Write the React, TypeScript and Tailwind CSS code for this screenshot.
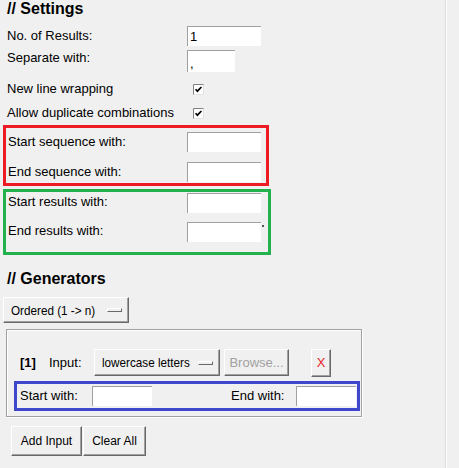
import React from "react";

const RAISED =
  "border border-t-white border-l-white border-r-[#696969] border-b-[#696969] shadow-[inset_-1px_-1px_0_#a0a0a0]";

function Check() {
  return (
    <svg width="11" height="11" viewBox="0 0 11 11" className="block">
      <rect x="0" y="0" width="11" height="11" fill="#fff" />
      <path d="M0.5 11 V0.5 H11" stroke="#808080" fill="none" />
      <path d="M10.5 0.5 V10.5 H0.5" stroke="#e3e3e3" fill="none" />
      <path d="M2.6 5.2 L4.4 7.2 L8.4 3" stroke="#000" strokeWidth="1.7" fill="none" />
    </svg>
  );
}

function Indicator() {
  return (
    <div className="w-[15px] h-[4px] border border-t-white border-l-white border-r-[#696969] border-b-[#696969] bg-[#f0f0f0]" />
  );
}

function Dropdown({ label, className }: { label: string; className: string }) {
  return (
    <div className={`${RAISED} ${className} flex items-center pl-[7px] pr-[6px]`}>
      <span className="w-[80px] whitespace-nowrap inline-block origin-left scale-x-[0.9] text-[13px] leading-[15px]">
        {label}
      </span>
      <div className="ml-auto">
        <Indicator />
      </div>
    </div>
  );
}

export default function App() {
  return (
    <div className="w-[459px] h-[468px] bg-[#f0f0f0] flex font-['Liberation_Sans',Arial,sans-serif] text-[13px] text-black overflow-hidden">
      <div className="w-[446px] h-full border-r border-[#dcdcdc] flex flex-col">
        {/* Settings */}
        <div className="pl-[7px] h-[24px] font-bold text-[16px] leading-[18px]">// Settings</div>

        <div className="mt-[2px] h-[20px] pl-[7px] flex items-center">
          <div className="w-[180px]">No. of Results:</div>
          <div className="w-[74px] h-[20px] bg-white border-t border-l border-[#a0a0a0] pl-[2px] leading-[19px]">1</div>
        </div>

        <div className="mt-[4px] h-[22px] pl-[7px] flex items-start">
          <div className="w-[180px] leading-[15px]">Separate with:</div>
          <div className="w-[48px] h-[22px] bg-white border-t border-l border-[#a0a0a0] pl-[2px] pt-[5px] leading-[15px]">,</div>
        </div>

        <div className="mt-[5px] h-[24px] pl-[7px] flex items-center">
          <div className="w-[186px]">New line wrapping</div>
          <Check />
        </div>
        <div className="h-[24px] pl-[7px] flex items-center">
          <div className="w-[186px]">Allow duplicate combinations</div>
          <Check />
        </div>

        {/* red box */}
        <div className="ml-[3px] w-[266px] h-[61px] border-[3px] border-[#ed1c24] pl-[2px] pt-[4px] flex flex-col gap-[10px]">
          <div className="h-[20px] flex items-center">
            <div className="w-[179px]">Start sequence with:</div>
            <div className="w-[74px] h-[20px] bg-white border-t border-l border-[#a0a0a0]" />
          </div>
          <div className="h-[20px] flex items-center">
            <div className="w-[179px]">End sequence with:</div>
            <div className="w-[74px] h-[20px] bg-white border-t border-l border-[#a0a0a0]" />
          </div>
        </div>

        {/* green box */}
        <div className="mt-[3px] ml-[3px] w-[268px] h-[66px] border-[3px] border-[#22b14c] pl-[2px] pt-[1px] flex flex-col gap-[9px]">
          <div className="h-[20px] flex items-center">
            <div className="w-[179px] -mt-[3px]">Start results with:</div>
            <div className="w-[74px] h-[20px] bg-white border-t border-l border-[#a0a0a0]" />
          </div>
          <div className="h-[20px] flex items-center">
            <div className="w-[179px] -mt-[2px]">End results with:</div>
            <div className="w-[74px] h-[20px] bg-white border-t border-l border-[#a0a0a0]" />
            <div className="self-start mt-[3px] ml-[1px] w-[2px] h-[2px] bg-[#555]" />
          </div>
        </div>

        {/* Generators */}
        <div className="mt-[15px] pl-[7px] h-[18px] font-bold text-[16px] leading-[18px]">// Generators</div>

        <Dropdown label="Ordered (1 -> n)" className="mt-[9px] ml-[3px] w-[126px] h-[26px]" />

        {/* panel */}
        <div className="mt-[6px] ml-[6px] w-[356px] h-[88px] border border-[#a0a0a0] shadow-[inset_1px_1px_0_#fff,1px_1px_0_#fff] pt-[19px] flex flex-col">
          <div className="h-[27px] flex items-center pl-[13px]">
            <span className="font-bold w-[29px]">[1]</span>
            <span className="w-[45px]">Input:</span>
            <Dropdown label="lowercase letters" className="w-[126px] h-[27px]" />
            <div className={`${RAISED} ml-[4px] w-[65px] h-[27px] flex items-center justify-center text-[#a0a0a0]`}>
              Browse...
            </div>
            <div className={`${RAISED} ml-[22px] w-[20px] h-[28px] flex items-center justify-center text-[#e8242c]`}>
              X
            </div>
          </div>
          <div className="mt-[5px] ml-[7px] w-[346px] h-[30px] border-[3px] border-[#3f48cc] pl-[3px] pt-[2px] flex items-start">
            <div className="w-[72px] leading-[20px]">Start with:</div>
            <div className="w-[60px] h-[20px] bg-white border-t border-l border-[#a0a0a0]" />
            <div className="ml-[79px] w-[65px] leading-[20px]">End with:</div>
            <div className="w-[60px] h-[20px] bg-white border-t border-l border-[#a0a0a0]" />
          </div>
        </div>

        <div className="mt-[9px] ml-[11px] flex">
          <div className={`${RAISED} w-[71px] h-[30px] flex items-center justify-center text-[12px]`}>Add Input</div>
          <div className={`${RAISED} ml-[1px] w-[63px] h-[30px] flex items-center justify-center text-[12px]`}>Clear All</div>
        </div>
      </div>
      <div className="w-px h-full bg-white" />
    </div>
  );
}
